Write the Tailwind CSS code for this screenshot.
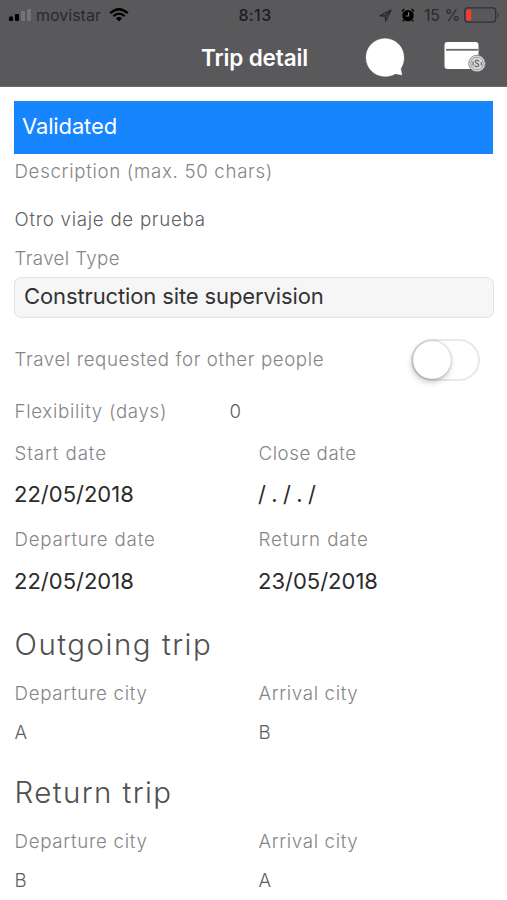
<!DOCTYPE html>
<html lang="en"><head><meta charset="utf-8"><title>Trip detail</title>
<script src="https://cdn.jsdelivr.net/npm/@tailwindcss/browser@4"></script></head>
<body class="h-[900px] w-[507px] overflow-hidden bg-white font-['Inter',sans-serif] text-[#303030]">
<header class="h-[87px] border-b border-[#6c6c6e] bg-[#59595b]">
  <div class="grid h-[30px] grid-cols-[1fr_auto_1fr] items-center pr-[7px] pl-2 text-[16px] text-[#29292b]">
    <div class="flex items-center">
      <svg class="mr-1" width="24" height="14" viewBox="0 0 24 14"><g fill="#000"><rect x="1" y="8.5" width="4" height="4.5" rx="1"/><rect x="7" y="6" width="4" height="7" rx="1"/></g><g fill="#747476"><rect x="13" y="3" width="4" height="10" rx="1"/><rect x="19" y="1" width="4" height="12" rx="1"/></g></svg>
      <span>movistar</span>
      <svg class="ml-2" width="20" height="14" viewBox="0 0 20 14" fill="none" stroke="#000" stroke-width="2.3"><path d="M1.2 5.2Q10-2.8 18.8 5.2M4.4 8.2Q10 3 15.6 8.2"/><path d="M10 13.5 6.9 10.3Q10 7.8 13.1 10.3Z" fill="#000" stroke="none"/></svg>
    </div>
    <span class="pl-[2px] font-medium tracking-[0.4px] text-[#1c1c1e]">8:13</span>
    <div class="flex items-center justify-end">
      <svg class="mr-[9px]" width="13" height="13" viewBox="0 0 13 13" fill="none" stroke="#29292b" stroke-width="1.3" stroke-linejoin="round"><path d="M1 6.8 12 1 6.7 12 6.2 7Z"/><path d="M6.4 6.8 11 2" /></svg>
      <svg class="mr-[9px]" width="14" height="14" viewBox="0 0 14 14"><circle cx="7" cy="7.6" r="5.7" fill="#000"/><path d="M.8 3.4 3.4 1M13.2 3.4 10.6 1M3 12 1.7 13.3M11 12l1.3 1.3" stroke="#000" stroke-width="1.3"/><path d="M7.6 4.3V8H4.8" fill="none" stroke="#77777a" stroke-width="1.2"/></svg>
      <span class="tracking-[-0.1px]">15 %</span>
      <svg class="ml-1" width="36" height="16" viewBox="0 0 36 16"><rect x=".7" y=".9" width="31" height="14.2" rx="3" fill="none" stroke="#303032" stroke-width="1.2"/><rect x="2.4" y="2.6" width="4.8" height="10.8" rx="1" fill="#fb3b31"/><path d="M33.5 5.2Q36 8 33.5 10.8Z" fill="#303032"/></svg>
    </div>
  </div>
  <div class="grid h-[55px] grid-cols-[1fr_auto_1fr] items-center">
    <h1 class="col-start-2 pl-[2px] text-[22.5px] leading-[27px] font-semibold tracking-[-0.15px] text-white">Trip detail</h1>
    <div class="flex items-center justify-end pr-[20px]">
      <svg class="mr-[39px]" width="40" height="40" viewBox="0 0 40 40"><path d="M20 .5C30.500.5 39 9 39 19.500c0 4.500-1.300 8.300-3.300 11.200l1.300 6.300-6.600-1.300C27.500 37.500 24 38.500 20 38.500 9.500 38.500 1 30 1 19.500S9.500.5 20 .5Z" fill="#fff" stroke="#fff" stroke-width=".3" stroke-linejoin="round"/></svg>
      <svg class="mb-[2px]" width="43" height="34" viewBox="0 0 43 34"><rect x="0.500" y="2" width="34" height="27" rx="3" fill="#fff"/><path d="M2 9.800H34" stroke="#6b6b6d" stroke-width="1.800"/><circle cx="33" cy="23.500" r="8.300" fill="#dcdcdc" stroke="#77777a" stroke-width=".8"/><circle cx="33" cy="23.500" r="6.300" fill="none" stroke="#9a9a9c" stroke-width="1"/><path d="M35.300 21.500q-2.300-2.200-3.800-.7c-1.400 1.900 3.300 2.500 3.300 4.500-.5 2-3 1.700-4.300.2" fill="none" stroke="#6b6b6d" stroke-width="1.300"/><path d="M29 21.500v4M37.300 22v3.500" stroke="#6b6b6d" stroke-width="1.200"/></svg>
    </div>
  </div>
</header>
<main class="px-[14px] pt-[14px] text-[18.7px] leading-none font-light text-[#858587]">
  <div class="flex h-[53px] items-center bg-[#1785fe] pb-[3px] pl-2 text-[22px] font-normal tracking-[-0.13px] text-white">Validated</div>
  <div class="flex h-[35px] items-center pt-[2px] pl-[0.500px] tracking-[0.68px]">Description (max. 50 chars)</div>
  <div class="flex h-[60px] items-center pt-[2px] pl-[0.500px] tracking-[0.72px] text-[#606060]">Otro viaje de prueba</div>
  <div class="flex h-[18px] items-center pt-[2px] pl-[0.500px] tracking-[0.38px]">Travel Type</div>
  <div class="mt-[10px] flex h-[41px] w-[480px] items-center rounded-[7px] border border-[#e2e2e2] bg-[#f6f6f6] pb-[4px] pl-[9px] text-[22px] font-normal tracking-[-0.12px] text-[#333]">Construction site supervision</div>
  <div class="flex h-[82px] items-center justify-between pr-[13px]">
    <span class="pt-[2px] pl-[0.500px] tracking-[0.6px]">Travel requested for other people</span>
    <div class="mt-[2px] h-[42px] w-[69px] rounded-full border-2 border-[#e8e8e8] bg-white"><div class="h-[38px] w-[38px] rounded-full bg-white shadow-[-1px_3px_6px_rgba(0,0,0,0.24),0_0_2px_rgba(0,0,0,0.35)]"></div></div>
  </div>
  <div class="grid h-[23px] grid-cols-[215px_1fr] items-center pt-[2px] pl-[0.500px]"><span class="tracking-[0.7px]">Flexibility (days)</span><span class="text-[#606060]">0</span></div>
  <div class="grid h-[60px] grid-cols-[244px_1fr] items-center pt-[2px] pl-[0.500px]"><span class="tracking-[0.9px]">Start date</span><span class="tracking-[0.55px]">Close date</span></div>
  <div class="grid h-[24px] grid-cols-[244px_1fr] items-center pb-[2px] text-[22px] font-normal text-[#2b2b2b]"><span>22/05/2018</span><span class="tracking-[-0.4px]">/ . / . /</span></div>
  <div class="grid h-[65px] grid-cols-[244px_1fr] items-center pt-[2px] pl-[0.500px]"><span class="tracking-[0.8px]">Departure date</span><span class="tracking-[0.93px]">Return date</span></div>
  <div class="grid h-[18px] grid-cols-[244px_1fr] items-center text-[22px] leading-[14px] font-normal text-[#2b2b2b]"><span>22/05/2018</span><span>23/05/2018</span></div>
  <h2 class="mt-[30px] flex h-[48px] items-center pt-[2px] pl-[0.500px] text-[29.5px] tracking-[1.5px] text-[#505050]">Outgoing trip</h2>
  <div class="grid h-[50px] grid-cols-[244px_1fr] items-center pt-[2px] pl-[0.500px]"><span class="tracking-[0.7px]">Departure city</span><span class="tracking-[0.65px]">Arrival city</span></div>
  <div class="grid h-[28px] grid-cols-[244px_1fr] items-center pt-[2px] pl-[0.500px] text-[#606060]"><span>A</span><span>B</span></div>
  <h2 class="mt-[18px] flex h-[56px] items-center pt-[2px] pl-[0.500px] text-[29.5px] tracking-[1.4px] text-[#505050]">Return trip</h2>
  <div class="grid h-[42px] grid-cols-[244px_1fr] items-center pt-[2px] pl-[0.500px]"><span class="tracking-[0.7px]">Departure city</span><span class="tracking-[0.65px]">Arrival city</span></div>
  <div class="grid h-[36px] grid-cols-[244px_1fr] items-center pt-[2px] pl-[0.500px] text-[#606060]"><span>B</span><span>A</span></div>
</main>
</body></html>
